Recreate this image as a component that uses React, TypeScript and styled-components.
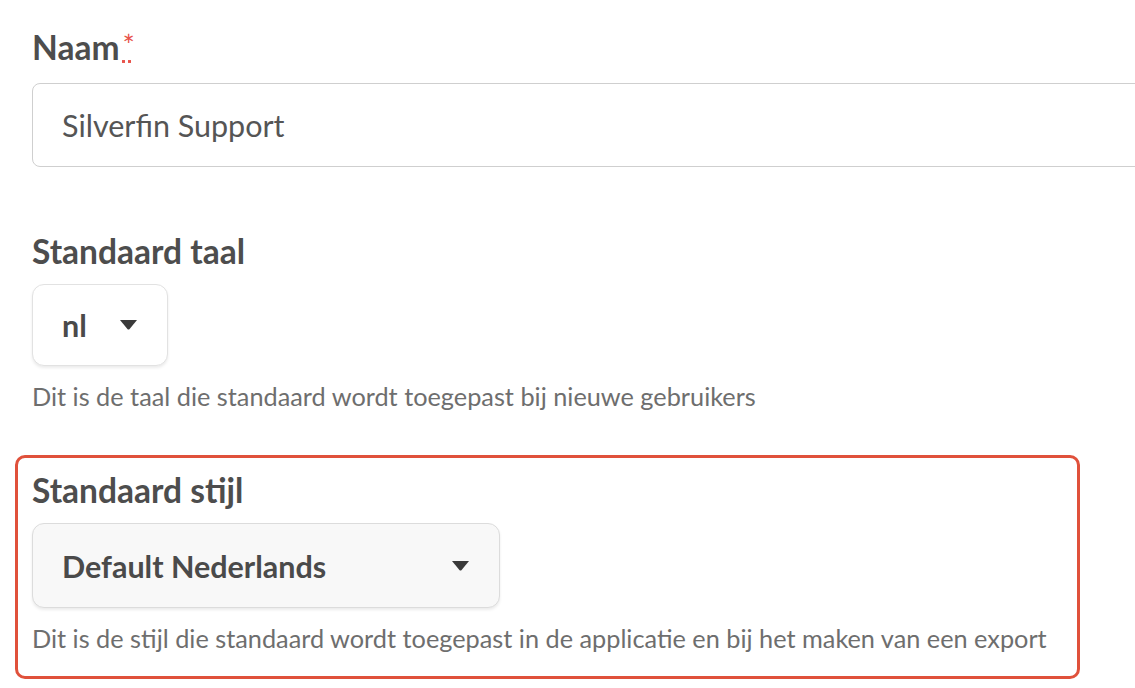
import React from "react";
import styled, { createGlobalStyle } from "styled-components";

const GlobalStyle = createGlobalStyle`
  html, body {
    margin: 0;
    padding: 0;
    background: #ffffff;
    overflow: hidden;
  }
  body {
    font-family: Lato, "Open Sans", "Liberation Sans", sans-serif;
    color: #4a4a4a;
  }
`;

const Form = styled.form`
  display: flex;
  flex-direction: column;
  padding: 25px 0 0 15px;
  width: 1200px;
`;

const Field = styled.div<{ $highlight?: boolean; $top?: number }>`
  display: flex;
  flex-direction: column;
  align-items: flex-start;
  margin-top: ${(p) => p.$top ?? 0}px;
  padding: ${(p) => (p.$highlight ? "12px 0 23px 14px" : "0 0 0 17px")};
  border: ${(p) => (p.$highlight ? "3px solid #e0513b" : "none")};
  border-radius: 10px;
  width: ${(p) => (p.$highlight ? "1045px" : "auto")};
`;

const Label = styled.label`
  font-size: 33.5px;
  line-height: 40px;
  font-weight: 700;
  color: #4d4d4d;
`;

const Required = styled.abbr`
  color: #e8524a;
  font-size: 29px;
  font-weight: 400;
  margin-left: 3px;
  vertical-align: 4px;
  text-decoration: underline dotted #e8524a;
  text-underline-offset: 4px;
`;

const TextInput = styled.input`
  box-sizing: border-box;
  margin-top: 16px;
  width: 1140px;
  height: 84px;
  border: 1.5px solid #cfcfcf;
  border-radius: 8px;
  padding: 0 0 0 29px;
  font-family: inherit;
  font-size: 30.5px;
  color: #555555;
  background: #ffffff;
  outline: none;
`;

const Select = styled.button<{ $filled?: boolean; $width: number; $height: number }>`
  box-sizing: border-box;
  margin-top: 13px;
  width: ${(p) => p.$width}px;
  height: ${(p) => p.$height}px;
  display: flex;
  align-items: center;
  justify-content: space-between;
  padding: 0 30px 0 29px;
  border: 1.5px solid ${(p) => (p.$filled ? "#dcdcdc" : "#e2e2e2")};
  border-radius: 12px;
  background: ${(p) => (p.$filled ? "#f8f8f8" : "#ffffff")};
  box-shadow: 0 2px 3px rgba(0, 0, 0, 0.08);
  font-family: inherit;
  font-size: 30.5px;
  font-weight: 700;
  color: #4a4a4a;
  cursor: pointer;
`;

const Caret = styled.svg`
  width: 17px;
  height: 10px;
  flex: none;
`;

const Help = styled.p`
  margin: 15px 0 0 0;
  font-size: 25.3px;
  line-height: 30px;
  color: #6e6e6e;
`;

const DownCaret = () => (
  <Caret viewBox="0 0 17 10">
    <path d="M0 0 H17 L9.6 9 Q8.5 10.2 7.4 9 Z" fill="#3a3a3a" />
  </Caret>
);

export default function App() {
  return (
    <>
      <GlobalStyle />
      <Form>
        <Field>
          <Label>
            Naam<Required title="verplicht">*</Required>
          </Label>
          <TextInput defaultValue="Silverfin Support" />
        </Field>
        <Field $top={64}>
          <Label>Standaard taal</Label>
          <Select type="button" $width={136} $height={82}>
            <span>nl</span>
            <DownCaret />
          </Select>
          <Help>Dit is de taal die standaard wordt toegepast bij nieuwe gebruikers</Help>
        </Field>
        <Field $highlight $top={44}>
          <Label>Standaard stijl</Label>
          <Select type="button" $filled $width={468} $height={85}>
            <span>Default Nederlands</span>
            <DownCaret />
          </Select>
          <Help>
            Dit is de stijl die standaard wordt toegepast in de applicatie en bij het maken van een export
          </Help>
        </Field>
      </Form>
    </>
  );
}
